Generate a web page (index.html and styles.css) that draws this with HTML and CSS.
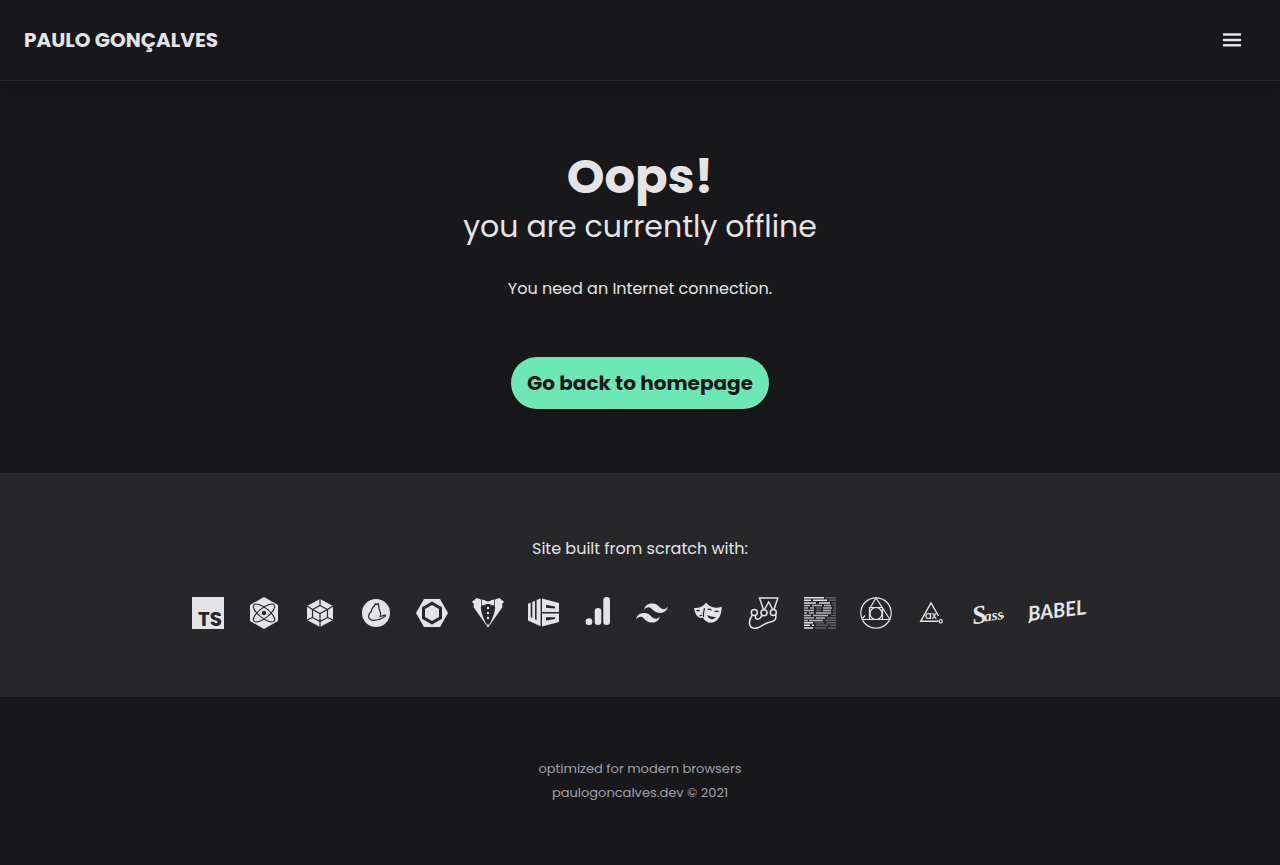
FILE: index.html
```html
<!DOCTYPE html>
<html lang="en">
<head>
<meta charset="utf-8">
<meta name="viewport" content="width=device-width, initial-scale=1">
<title>Offline | Paulo Gonçalves</title>
<link rel="stylesheet" href="styles.css">
</head>
<body>
<header class="site-header">
  <a class="brand" href="#">PAULO GONÇALVES</a>
  <button class="menu-button" type="button" aria-label="Open menu">
    <svg width="24" height="24" viewBox="0 0 24 24" fill="none" stroke="currentColor" stroke-width="2.5" stroke-linecap="round"><path d="M4 6.5h16M4 12h16M4 17.2h16"/></svg>
  </button>
</header>

<main class="offline">
  <h1 class="title">Oops!</h1>
  <h2 class="subtitle">you are currently offline</h2>
  <p class="message">You need an Internet connection.</p>
  <a class="home-link" href="#">Go back to homepage</a>
</main>

<section class="stack">
  <p class="stack-label">Site built from scratch with:</p>
  <ul class="logos">
    <li><svg class="logo" viewBox="0 0 32 32" role="img" aria-label="TypeScript"><path class="fill" d="M0 0h32v32H0z"/><text class="ts-text" x="6" y="29">TS</text></svg></li>
    <li><svg class="logo" viewBox="0 0 32 32" role="img" aria-label="Preact"><path class="fill" d="M16 0l14 8v16l-14 8-14-8V8z"/><g class="cut" stroke-width="1.1"><ellipse cx="16" cy="16" rx="13" ry="5" transform="rotate(38 16 16)"/><ellipse cx="16" cy="16" rx="13" ry="5" transform="rotate(-38 16 16)"/></g><circle class="dark" cx="16" cy="16" r="2.2"/></svg></li>
    <li><svg class="logo" viewBox="0 0 32 32" role="img" aria-label="webpack"><path class="fill" d="M16 2l13 7v14l-13 7-13-7V9z"/><g class="cut" stroke-width="1.2"><path d="M16 8.5l7.5 4v8L16 24.5l-7.5-4v-8zM8.5 12.5l7.5 4 7.5-4M16 16.500V24.500M16 2v6.500M3 9l5.500 3.500M29 9l-5.500 3.500M3 23l5.500-2.500M29 23l-5.500-2.500M16 24.500V30"/></g></svg></li>
    <li><svg class="logo" viewBox="0 0 32 32" role="img" aria-label="Yarn"><circle class="fill" cx="16" cy="16" r="14"/><path class="cut" stroke-width="1.200" d="M14 9.500L15.300 6.800l1.500.7 1.300-1 .8 3c-.4 1.500.3 2.400.9 4.300 1 2.200 1.200 4 .5 5.700 2-.1 2.500-1 4.400-1.400 1-.1 1.100 1 .2 1.400-2.400.8-3 2.300-5.500 2.800-3 1-5.500 1.300-7.600.8-1.700-.4-2.500-1.300-2.900-2.300-.5-1-.4-1.600-.1-2.700.3-2 1.500-3 2.600-3.700-.2-2.500 1-3.700 2-4.900z"/></svg></li>
    <li><svg class="logo" viewBox="0 0 32 32" role="img" aria-label="Nodemon"><path class="fill" d="M8 2h16l8 14-8 14H8L0 16z"/><path class="dark" d="M16 4.500l10 5.700v11.600l-10 5.700-10-5.700V10.200z"/><path class="fill" d="M16 8l7 4v8l-7 4-7-4v-8z"/></svg></li>
    <li><svg class="logo" viewBox="0 0 32 32" role="img" aria-label="Eleventy template"><path class="fill" d="M9 2.500L4.500 1 2.500 3 0 4.500l2 3-.5 2.500L15.500 30C11 20 8.500 15 9 8.500zM23 2.500L27.500 1l2 2L32 4.500l-2 3 .5 2.500L16.500 30C21 20 23.500 15 23 8.500z"/><path class="fill" d="M9.700 2.500q2.500-.2 4.800 1.800h3q2.300-2 4.800-1.800v6q-2.500.2-4.800-1.500h-3q-2.300 1.700-4.800 1.500z"/><path class="fill" d="M14 26l2 2 2-2-2 5z"/><circle class="fill" cx="16" cy="11" r="1.200"/><circle class="fill" cx="16" cy="16" r="1.200"/><circle class="fill" cx="16" cy="21" r="1.200"/></svg></li>
    <li><svg class="logo" viewBox="0 0 32 32" role="img" aria-label="WebdriverIO"><path class="fill" d="M0 6.800l2.700-1.200v14.600l1.600.8V4.900l2.700-1.200v18.500l1.600.8V3.100L12.600 1.500v27.800L0 23.500z"/><path class="fill" fill-rule="evenodd" d="M14 1.500l17 4.500v9H14zm4 6.200v3l9 .9V9.500zM14 16.500h17V25l-17 4.500zm4 3.700v3.300l9-1.400v-1.900z"/></svg></li>
    <li><svg class="logo logo-small" viewBox="0 0 28 32" role="img" aria-label="Analytics"><circle class="fill" cx="5" cy="24.700" r="3.400"/><rect class="fill" x="10.700" y="11" width="6.600" height="17" rx="3.300"/><rect class="fill" x="19.300" y="0" width="6.700" height="28" rx="3.300"/></svg></li>
    <li><svg class="logo" viewBox="0 0 24 24" role="img" aria-label="Tailwind CSS"><path class="fill" d="M12 4.800c-3.200 0-5.200 1.600-6 4.800 1.200-1.600 2.600-2.200 4.200-1.800.913.228 1.565.89 2.288 1.624C13.666 10.618 15.027 12 18 12c3.200 0 5.200-1.600 6-4.800-1.200 1.600-2.600 2.200-4.200 1.800-.913-.228-1.565-.89-2.288-1.624C16.337 6.182 14.976 4.800 12 4.800zM6 12c-3.200 0-5.200 1.600-6 4.800 1.200-1.600 2.600-2.200 4.200-1.800.913.228 1.565.89 2.288 1.624C7.666 17.818 9.027 19.200 12 19.200c3.200 0 5.200-1.600 6-4.800-1.200 1.600-2.600 2.200-4.200 1.800-.913-.228-1.565-.89-2.288-1.624C10.337 13.382 8.976 12 6 12z"/></svg></li>
    <li><svg class="logo" viewBox="0 0 32 32" role="img" aria-label="Playwright"><path class="fill" d="M2 11q6 .6 10.500-3.500L14 5.500q3 4 8 5 4 .5 7.800-.7c-.3 7-2.500 15-10.300 16-4 .2-6.800-2-8.500-5C5 22 3 16 2 11z"/><path class="cut" stroke-width="1.200" d="M12.500 11c-.8 3-1.300 6-1 9M4.500 14q1.500-1.300 3.200 0M7.500 18.500q1.500.5 2.500-.7M15.500 12.500q2-1.200 4 .8M22.500 14.500q2-1 4 .5"/><path class="dark" d="M15 18q4.500 2.300 9 2-2 2.700-5 2-3-.8-4-4z"/></svg></li>
    <li><svg class="logo" viewBox="0 0 32 32" role="img" aria-label="Jest"><g class="line" stroke-width="1.500"><path d="M15.500 12.500L11.500 1h18.300L26 12.500M16.500 12.500L20.700 5l4 7.500"/><circle cx="6.300" cy="15.500" r="3"/><circle cx="16" cy="15.700" r="3"/><circle cx="25.300" cy="15.500" r="3"/><path d="M4.300 18C2 21.500.8 25 1.800 28c1.200 3.500 5 4 8.600 2.500 4.500-2 6.500-4.500 11-5.300 5-.6 7.300-2.800 6.300-7.400M7.500 18.500c-.7 4 2.300 4.500 4.700 2.500l2-2.800"/></g></svg></li>
    <li><svg class="logo" viewBox="0 0 32 32" role="img" aria-label="Prettier"><g class="line" stroke-width="1.500"><path d="M0 .8h20M0 3.300h7M9 3.300h14M0 5.900h12M15 5.900h11M0 25.700h9M0 28.300h6M8 28.300h2M0 30.900h9"/><path opacity=".75" d="M0 8.500h6M8 8.500h10M20 8.500h7M0 11h4M6 11h4M19 11h9M0 13.500h10M19 13.500h8M0 15.900h3M5 15.900h5M12 15.900h15M0 18.400h7M9 18.400h15M0 20.900h10M12 20.900h9M0 23.400h4M5 23.400h14"/><path opacity=".3" d="M22 .8h10M25 3.300h7M28 5.900h4M29 8.500h3M12 11h5M30 11h2M12 13.500h5M29 13.500h3M29 15.900h3M27 18.400h5M23 20.900h9M21 23.400h11M11 25.700h9M22 25.700h10M12 28.300h12M26 28.300h6M11 30.900h11M24 30.900h8"/></g></svg></li>
    <li><svg class="logo" viewBox="0 0 32 32" role="img" aria-label="PostCSS"><g class="line" stroke-width="1.200"><circle cx="16" cy="16" r="15.200"/><path d="M2 22.500h28M9.500 10.500h13v12h-13zM9.500 12L16 .8 30 22.500M2.500 21.500L5 18.500"/><circle cx="16" cy="16.500" r="6"/></g></svg></li>
    <li><svg class="logo" viewBox="0 0 32 32" role="img" aria-label="axe"><path class="line" stroke-width="1.400" d="M22.500 19L15 6 4.700 24.300h18"/><circle class="line" stroke-width="1.200" cx="24.700" cy="24.300" r="1.600"/><text class="axe-text" x="9" y="22">ax</text></svg></li>
    <li><svg class="logo" viewBox="0 0 32 32" role="img" aria-label="Sass"><g transform="rotate(-8 16 18)"><text class="sass-s" x="0" y="25">S</text><text class="sass-rest" x="12" y="24">ass</text></g><path class="line" stroke-width="1.300" d="M28.500 19.500c2-1.500 3.500-1 3 1"/></svg></li>
    <li><svg class="logo logo-wide" viewBox="0 0 60 32" role="img" aria-label="Babel"><text class="babel-text" x="1" y="24" transform="rotate(-7 1 24)">BABEL</text><path class="line" stroke-width="1.200" d="M4 17L.8 26l4-4M50 17.500l8.500-1.800"/></svg></li>
  </ul>
</section>

<footer class="site-footer">
  <p>optimized for modern browsers</p>
  <p>paulogoncalves.dev © 2021</p>
</footer>
</body>
</html>
```
FILE: styles.css
```css
:root {
  --dark: #18181b;
  --panel: #27272a;
  --light: #e4e4e7;
  --muted: #a1a1aa;
  --accent: #6ee7b7;
}

* { box-sizing: border-box; }

body {
  margin: 0;
  background: var(--dark);
  color: var(--light);
  font-family: Poppins, Inter, "Open Sans", sans-serif;
  font-size: 16px;
  line-height: 24px;
}

h1, h2, p, ul { margin: 0; padding: 0; }

.site-header {
  display: flex;
  align-items: center;
  justify-content: space-between;
  padding: 16px 24px;
  border-bottom: 1px solid var(--panel);
  box-shadow: 0 20px 25px -5px rgba(0, 0, 0, 0.1), 0 10px 10px -5px rgba(0, 0, 0, 0.04);
}

.brand {
  color: inherit;
  font-size: 20px;
  font-weight: 700;
  line-height: 28px;
  text-decoration: none;
}

.menu-button {
  display: flex;
  padding: 12px;
  border: 0;
  background: none;
  color: inherit;
}

.offline {
  display: flex;
  flex-direction: column;
  align-items: center;
  padding: 64px 24px;
  text-align: center;
}

.title {
  font-size: 48px;
  font-weight: 700;
  line-height: 64px;
}

.subtitle {
  font-size: 30px;
  font-weight: 400;
  line-height: 36px;
}

.message { margin: 32px 0 56px; }

.home-link {
  padding: 12px 16px;
  border-radius: 26px;
  background: var(--accent);
  box-shadow: 0 4px 6px rgba(0, 0, 0, 0.15);
  color: var(--dark);
  font-size: 20px;
  font-weight: 700;
  line-height: 28px;
  text-decoration: none;
}

.stack {
  padding: 64px 24px 68px;
  background: var(--panel);
  text-align: center;
}

.logos {
  display: flex;
  flex-wrap: wrap;
  justify-content: center;
  gap: 24px;
  margin-top: 36px;
  list-style: none;
}

.logo {
  display: block;
  width: 32px;
  height: 32px;
  overflow: visible;
}

.logo-small { width: 28px; }
.logo-wide { width: 60px; }

.fill { fill: var(--light); }
.dark { fill: var(--panel); }
.cut { fill: none; stroke: var(--panel); }
.line { fill: none; stroke: var(--light); }

.ts-text {
  fill: var(--panel);
  font: 700 20px Poppins, Lato, sans-serif;
}

.axe-text {
  fill: var(--light);
  font: 500 10px Poppins, Lato, sans-serif;
}

.sass-s,
.sass-rest {
  fill: var(--light);
  font: italic 700 26px "Liberation Serif", serif;
}

.sass-rest { font-size: 15px; }

.babel-text {
  fill: var(--light);
  font: italic 700 20px Lato, sans-serif;
}

.site-footer {
  padding: 60px 24px;
  color: var(--muted);
  font-size: 13px;
  text-align: center;
}
```
